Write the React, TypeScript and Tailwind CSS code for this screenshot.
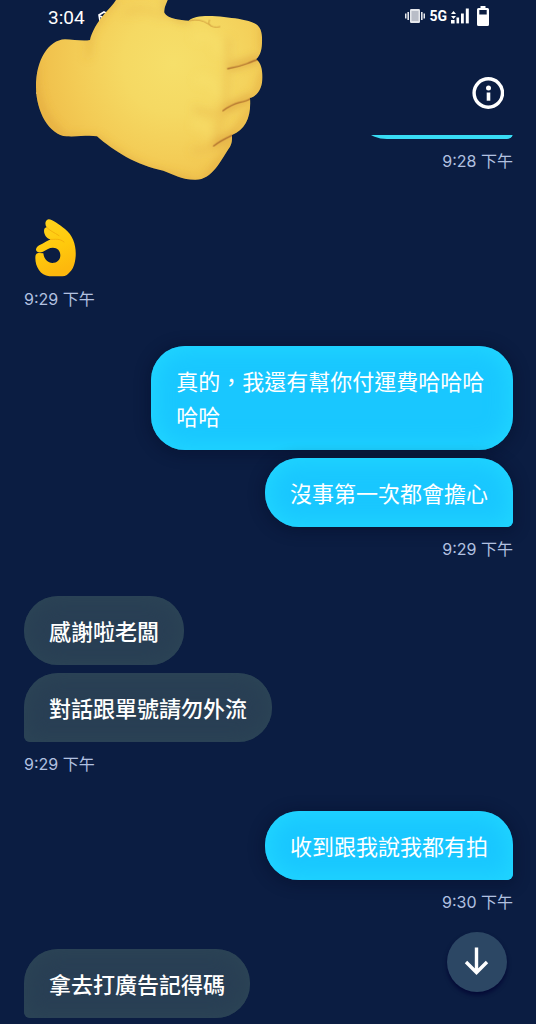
import clsx from 'clsx';

type Side = 'in' | 'out';

type MessageGroup = {
  id: string;
  side: Side;
  lines: string[];
  time?: string;
};

const groups: MessageGroup[] = [
  { id: 'g1', side: 'out', lines: ['真的，我還有幫你付運費哈哈哈哈哈', '沒事第一次都會擔心'], time: '9:29 下午' },
  { id: 'g2', side: 'in', lines: ['感謝啦老闆', '對話跟單號請勿外流'], time: '9:29 下午' },
  { id: 'g3', side: 'out', lines: ['收到跟我說我都有拍'], time: '9:30 下午' },
  { id: 'g4', side: 'in', lines: ['拿去打廣告記得碼'] }
];

const bubbleTheme: Record<Side, string> = {
  out: 'bg-[#19c7ff] text-white shadow-[inset_0_0_22px_4px_#20d6ff,0_2px_14px_3px_rgba(6,12,40,0.4)]',
  in: 'bg-[#293f54] font-medium text-white shadow-[inset_0_0_20px_2px_#2c4556]'
};

function Time({ children, side }: { children: string; side: Side }) {
  return (
    <time
      className={clsx(
        'mt-3 mb-[37px] block h-5 text-[16px] leading-5 text-[#b2c1e0]',
        side === 'out' ? 'text-right' : 'text-left'
      )}
    >
      {children}
    </time>
  );
}

function Bubble({ text, side, tail }: { text: string; side: Side; tail: boolean }) {
  return (
    <p
      className={clsx(
        'max-w-[74%] rounded-[34px] px-[25px] pt-[19px] pb-[15px] text-[22px] leading-[35px]',
        bubbleTheme[side],
        tail && (side === 'out' ? 'rounded-br-[6px]' : 'rounded-bl-[6px]')
      )}
    >
      {text}
    </p>
  );
}

function StatusBar() {
  return (
    <div className="flex h-9 items-center justify-between pr-[47px] pl-12 font-[Roboto,sans-serif] text-white">
      <div className="flex items-center gap-3">
        <span className="text-[19px] leading-6">3:04</span>
        <svg className="h-4 w-4" viewBox="0 0 16 16" fill="none" stroke="currentColor" strokeWidth="1.6" aria-hidden="true">
          <path d="M2 5 7 2l6 3v6l-5 3-5-3Z" />
          <path d="m3 6 5 3 5-3" />
        </svg>
      </div>
      <div className="flex h-8 items-center pb-1">
        <svg className="h-4 w-5" viewBox="0 0 20 16" fill="#e5e7eb" aria-hidden="true">
          <rect x="5" y="1" width="10" height="14" rx="1.2" />
          <rect x="6.5" y="3" width="7" height="10" fill="#b9bdc7" />
          <rect x="2.4" y="4" width="1.6" height="8" />
          <rect x="0" y="5.5" width="1.5" height="5" />
          <rect x="16" y="4" width="1.6" height="8" />
          <rect x="18.5" y="5.5" width="1.5" height="5" />
        </svg>
        <span className="ml-1 text-[14px] leading-4 font-bold">5G</span>
        <svg className="ml-1 h-4 w-[18px]" viewBox="0 0 18 16" fill="currentColor" aria-hidden="true">
          <path d="M2.5 3 5 6H0ZM0 8h5L2.5 11ZM0 12h3.6v3.4H0Z" />
          <rect x="5.5" y="9.5" width="2.6" height="5.9" />
          <rect x="10" y="5.5" width="2.8" height="9.9" />
          <rect x="14.8" y="0.5" width="3" height="14.9" />
        </svg>
        <svg className="ml-2 h-5 w-3" viewBox="0 0 12 20" aria-hidden="true">
          <path d="M3.5 0h5v2H10.500q1.500 0 1.500 1.500v15Q12 20 10.500 20h-9Q0 20 0 18.500v-15Q0 2 1.500 2h2Z" fill="#fff" />
          <path d="M2.300 4h7.400v4.500H2.300Z" fill="#0b1d42" />
        </svg>
      </div>
    </div>
  );
}

function ThumbsUp() {
  return (
    <svg
      className="pointer-events-none absolute top-0 left-0 h-[200px] w-[280px]"
      viewBox="0 0 840 600"
      role="img"
      aria-label="Thumbs up"
    >
      <defs>
        <radialGradient id="skin" gradientUnits="userSpaceOnUse" cx="520" cy="190" r="430">
          <stop offset="0" stopColor="#f6df6a" />
          <stop offset="0.35" stopColor="#f5d963" />
          <stop offset="0.7" stopColor="#f3cb55" />
          <stop offset="1" stopColor="#efbd49" />
        </radialGradient>
        <filter id="soft" x="-30%" y="-30%" width="160%" height="160%">
          <feGaussianBlur stdDeviation="13" />
        </filter>
        <filter id="crease" x="-30%" y="-60%" width="160%" height="220%">
          <feGaussianBlur stdDeviation="2" />
        </filter>
        <clipPath id="hand">
          <path d="M348 0C340 14 325 28 313 42 292 68 275 95 270 120 250 125 220 118 195 118 145 120 108 180 108 260 108 335 148 405 200 409 235 411 265 404 291 409 340 452 410 497 490 512 520 524 548 539 585 539 638 540 662 480 690 440 697 428 696 416 696 405 738 388 754 350 750 294 782 284 789 250 787 222 786 202 779 184 768 178 784 164 787 140 786 112 784 68 760 66 715 56 670 50 590 38 566 62 540 60 502 56 493 38 491 22 500 10 503 0Z" />
        </clipPath>
      </defs>
      <g clipPath="url(#hand)">
        <rect width="840" height="600" fill="url(#skin)" />
        <g filter="url(#soft)" fill="none" strokeLinecap="round">
          <path d="M268 122Q272 145 262 170" stroke="#dda33a" strokeWidth="10" opacity="0.5" />
          <path d="M104 200Q96 335 195 415L290 418Q400 505 490 522L585 550" stroke="#dba03a" strokeWidth="20" opacity="0.55" />
          <path d="M345 0Q278 70 264 122" stroke="#e0a23c" strokeWidth="14" opacity="0.55" />
          <path d="M500 0Q484 44 562 62" stroke="#d99a36" strokeWidth="14" opacity="0.65" />
          <path d="M380 38Q440 20 485 48" stroke="#ebbd4e" strokeWidth="18" opacity="0.45" />
          <path d="M684 120V200L674 320 645 430" stroke="#e5b048" strokeWidth="13" opacity="0.5" />
          <path d="M695 200 775 176M680 326 750 292M645 434 700 402" stroke="#d69538" strokeWidth="15" opacity="0.8" />
          <path d="M585 325Q625 350 672 336M580 450Q610 455 645 437" stroke="#e5b048" strokeWidth="12" opacity="0.55" />
          <path d="M792 80V150M795 210 768 290M755 330 703 402M700 430 612 545" stroke="#dda038" strokeWidth="17" opacity="0.6" />
          <path d="M590 110Q650 100 655 150M600 240Q645 235 650 280M590 375Q625 370 622 400" stroke="#f8e473" strokeWidth="30" opacity="0.35" />
        </g>
        <g filter="url(#crease)" fill="none" strokeLinecap="round" stroke="#a9672c" opacity="0.9">
          <path d="M683 206Q715 201 740 191T772 179" strokeWidth="4" />
          <path d="M669 332Q695 313 720 307T752 295" strokeWidth="4" />
          <path d="M641 438Q658 424 696 406" strokeWidth="4" />
          <path d="M568 62Q600 54 625 72 640 86 660 80M628 60Q622 70 632 78" stroke="#cf9a3c" strokeWidth="3" />
        </g>
      </g>
    </svg>
  );
}

function OkHand() {
  return (
    <svg className="ml-[11px] h-[58px] w-[42px]" viewBox="106 56 126 174" role="img" aria-label="OK hand">
      <defs>
        <linearGradient id="ok" x1="0" y1="0" x2="0.300" y2="1">
          <stop offset="0" stopColor="#ffd51f" />
          <stop offset="0.6" stopColor="#ffc90c" />
          <stop offset="1" stopColor="#fdb80d" />
        </linearGradient>
      </defs>
      <path
        d="M147 57C159 57 178 73 196 86 221 106 230 137 228 168 226 190 222 207 205 221 199 227 192 228 181 228H149C122 225 107 199 107 173 107 161 111 157 119 158L131 159C133 176 145 188 158 188 172 188 182 179 182 165 182 151 173 142 160 142 148 142 142 147 130 154 121 158 111 157 109 149 109 138 120 133 128 130 137 126 145 120 153 117 140 115 130 98 134 86 135 82 139 82 141 81 134 72 137 58 147 57Z"
        fill="url(#ok)"
      />
      <path d="M141 81C150 91 163 96 178 106M153 117C166 118 180 113 193 125" fill="none" stroke="#f2ab0b" strokeWidth="2.500" strokeLinecap="round" />
    </svg>
  );
}

export default function App() {
  return (
    <main className="relative min-h-screen overflow-hidden bg-[#0b1d42] font-[Inter,'Noto_Sans_CJK_TC',sans-serif]">
      <header className="h-[135px]">
        <StatusBar />
        <nav className="flex items-center justify-between px-8 pt-[41px] text-white">
          <button type="button" aria-label="Back" className="h-8 w-8">
            <svg className="h-8 w-8" viewBox="0 0 32 32" fill="none" stroke="currentColor" strokeWidth="3" aria-hidden="true">
              <path d="M28 16H6M16 6 6 16l10 10" />
            </svg>
          </button>
          <button type="button" aria-label="Conversation info" className="h-8 w-8">
            <svg className="h-8 w-8" viewBox="0 0 32 32" aria-hidden="true">
              <circle cx="16.300" cy="16" r="14.200" fill="none" stroke="currentColor" strokeWidth="3.400" />
              <circle cx="16.500" cy="11" r="2.500" fill="currentColor" />
              <path d="M14.700 15.500h3.600v8.200h-3.600Z" fill="currentColor" />
            </svg>
          </button>
        </nav>
      </header>

      <section className="pr-[23px] pl-6">
        {/* bubble scrolled away under the header */}
        <div className="flex h-1 items-end justify-end overflow-hidden">
          <div className="h-[69px] w-40 shrink-0 rounded-[34px] rounded-br-[6px] bg-[#38dcf5]" />
        </div>
        <Time side="out">9:28 下午</Time>

        <div className="flex h-[69px] items-end">
          <OkHand />
        </div>
        <Time side="in">9:29 下午</Time>

        {groups.map((group) => (
          <div key={group.id}>
            <div className={clsx('flex flex-col gap-2', group.side === 'out' ? 'items-end' : 'items-start')}>
              {group.lines.map((line, index) => (
                <Bubble key={line} text={line} side={group.side} tail={index === group.lines.length - 1} />
              ))}
            </div>
            {group.time ? <Time side={group.side}>{group.time}</Time> : null}
          </div>
        ))}
      </section>

      <ThumbsUp />

      <button
        type="button"
        aria-label="Scroll to latest"
        className="fixed right-[29px] bottom-8 flex h-[60px] w-[60px] items-center justify-center rounded-full bg-[#2c4764] text-white shadow-[0_3px_4px_rgba(2,4,50,0.8)]"
      >
        <svg className="h-8 w-8" viewBox="0 0 32 32" fill="none" stroke="currentColor" strokeWidth="3.400" aria-hidden="true">
          <path d="M15.500 1.500V26M5 16 15.500 26.500 26 16" />
        </svg>
      </button>
    </main>
  );
}
